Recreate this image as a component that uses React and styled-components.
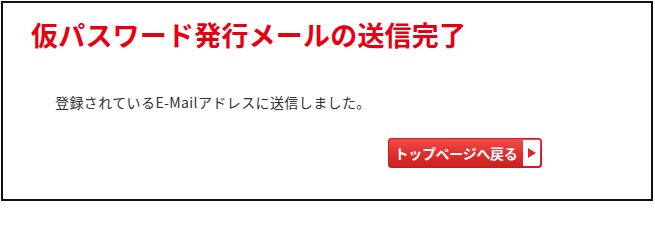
import React from 'react';
import styled, { createGlobalStyle } from 'styled-components';

const GlobalStyle = createGlobalStyle`
  html, body {
    margin: 0;
    padding: 0;
    background: #fff;
  }
  body {
    font-family: "Noto Sans CJK JP", "Noto Sans", sans-serif;
  }
`;

const Panel = styled.div`
  box-sizing: border-box;
  margin: 1px 0 0 1px;
  width: 652px;
  height: 200px;
  border: 2px solid #111;
  padding: 13px 28px 0 28px;
  display: flex;
  flex-direction: column;
`;

const Title = styled.h1`
  margin: 0;
  color: #e60012;
  font-size: 27px;
  font-weight: 700;
  letter-spacing: 0.2px;
  line-height: 38px;
`;

const Message = styled.p`
  margin: 38px 0 0 24px;
  color: #333;
  font-size: 14px;
  letter-spacing: 0.4px;
  line-height: 20px;
`;

const Actions = styled.div`
  display: flex;
  justify-content: flex-end;
  margin-top: 26px;
  padding-right: 81px;
`;

const BackButton = styled.a`
  box-sizing: border-box;
  display: flex;
  align-items: stretch;
  width: 154px;
  height: 30px;
  border-radius: 3px;
  border: 1px solid #c81e1e;
  background: linear-gradient(to bottom, #f24b4b 0%, #e03030 50%, #cc2020 100%);
  text-decoration: none;
  overflow: hidden;
  cursor: pointer;
`;

const ButtonLabel = styled.span`
  flex: 1;
  display: flex;
  align-items: center;
  justify-content: center;
  color: #fff;
  font-size: 14px;
  font-weight: 600;
  letter-spacing: -0.3px;
`;

const ArrowBox = styled.span`
  width: 17px;
  margin: 1px 1px 1px 0;
  border-radius: 0 2px 2px 0;
  background: #fff;
  display: flex;
  align-items: center;
  justify-content: center;
`;

const Arrow = styled.span`
  width: 0;
  height: 0;
  border-top: 5px solid transparent;
  border-bottom: 5px solid transparent;
  border-left: 8px solid #d42a2a;
  margin-left: 1px;
`;

export default function App() {
  return (
    <>
      <GlobalStyle />
      <Panel>
        <Title>仮パスワード発行メールの送信完了</Title>
        <Message>登録されているE-Mailアドレスに送信しました。</Message>
        <Actions>
          <BackButton>
            <ButtonLabel>トップページへ戻る</ButtonLabel>
            <ArrowBox>
              <Arrow />
            </ArrowBox>
          </BackButton>
        </Actions>
      </Panel>
    </>
  );
}
